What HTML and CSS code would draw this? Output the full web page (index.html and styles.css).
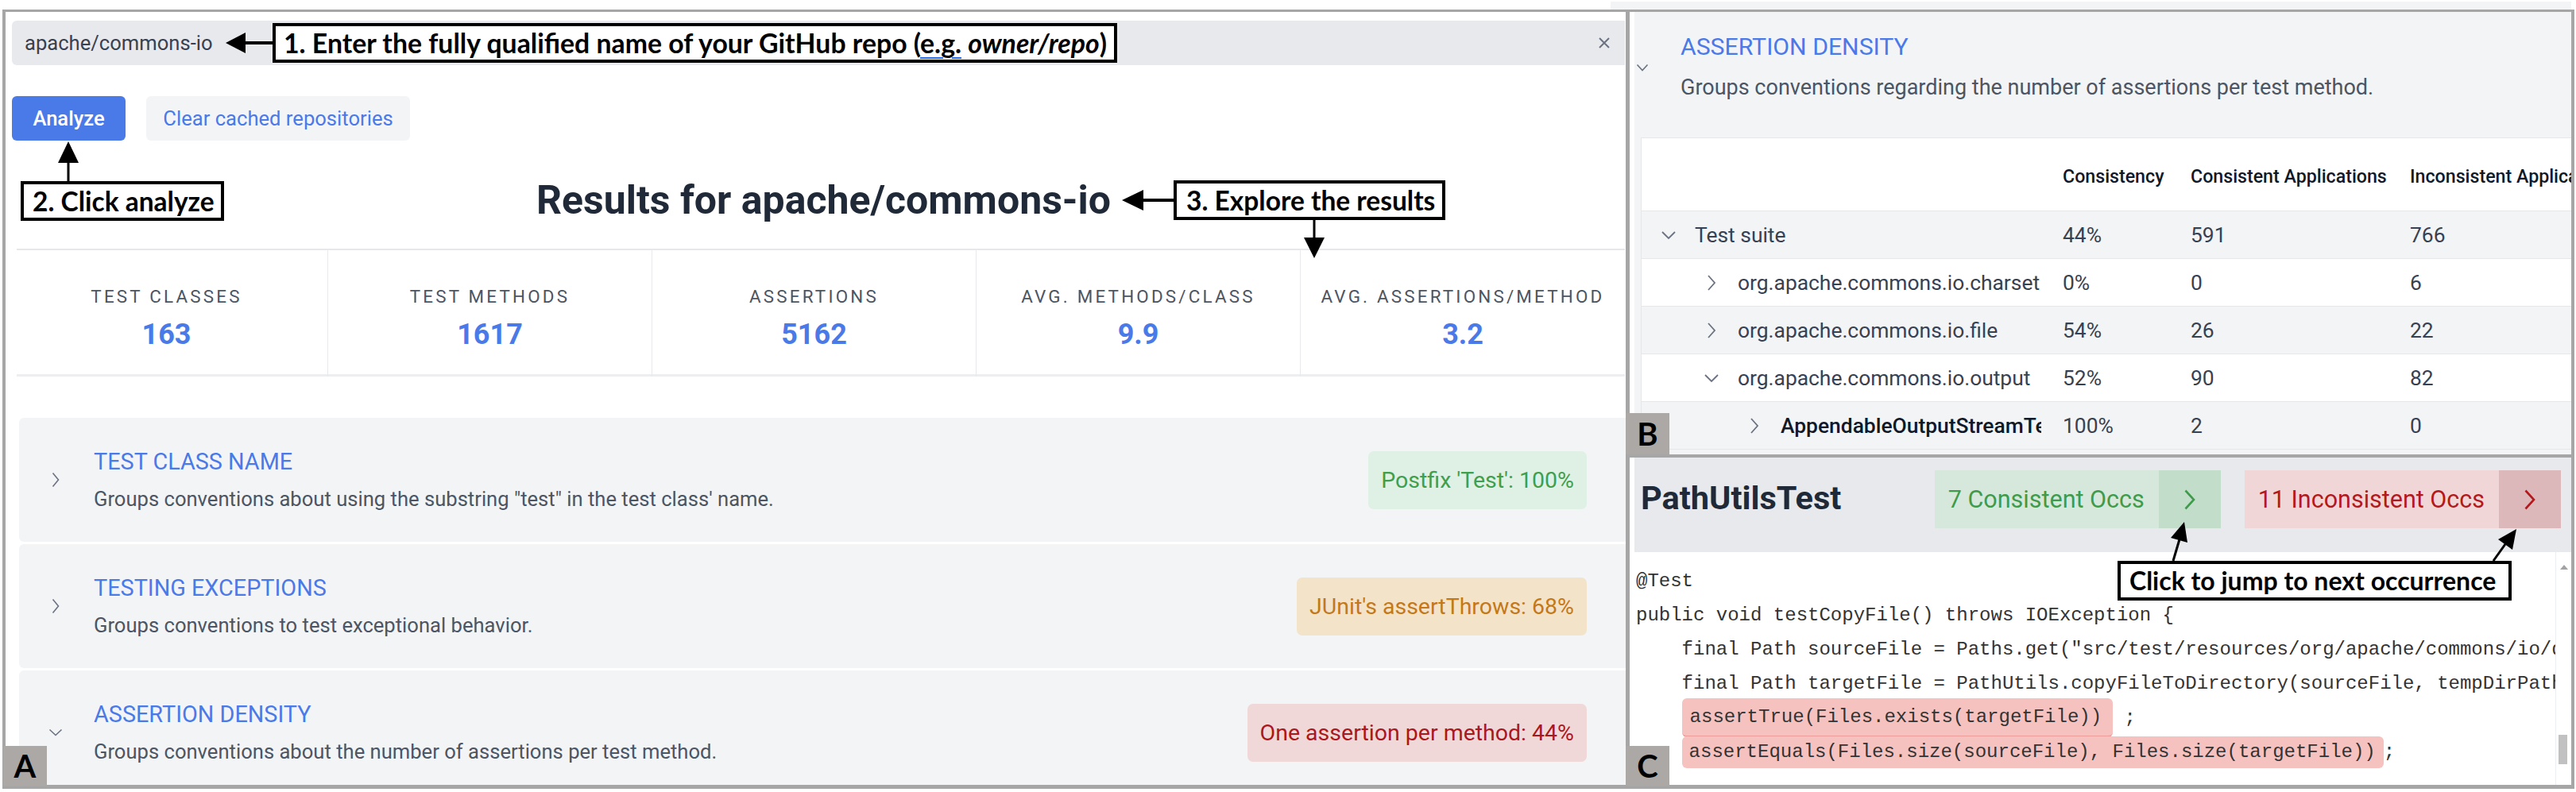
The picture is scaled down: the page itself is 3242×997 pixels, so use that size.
FILE: index.html
```html
<!DOCTYPE html>
<html lang="en">
<head>
<meta charset="utf-8">
<title>Test convention explorer</title>
<link rel="stylesheet" href="styles.css">
</head>
<body>
<div class="top-strip"></div>
<div class="frame">
  <section class="panel panel-a">
    <div class="repo-input">
      <span class="repo-text">apache/commons-io</span>
      <svg class="close" viewBox="0 0 14 14" width="14" height="14"><path d="M1 1 L13 13 M13 1 L1 13" stroke="#6b7280" stroke-width="2" fill="none"/></svg>
    </div>
    <div class="actions">
      <button class="btn btn-primary">Analyze</button>
      <button class="btn btn-secondary">Clear cached repositories</button>
    </div>
    <h1 class="results-title">Results for apache/commons-io</h1>
    <div class="stats">
      <div class="stat"><div class="stat-label">TEST CLASSES</div><div class="stat-value">163</div></div>
      <div class="stat"><div class="stat-label">TEST METHODS</div><div class="stat-value">1617</div></div>
      <div class="stat"><div class="stat-label">ASSERTIONS</div><div class="stat-value">5162</div></div>
      <div class="stat"><div class="stat-label">AVG. METHODS/CLASS</div><div class="stat-value">9.9</div></div>
      <div class="stat"><div class="stat-label">AVG. ASSERTIONS/METHOD</div><div class="stat-value">3.2</div></div>
    </div>
    <div class="groups">
      <div class="group">
        <div class="chev-col"><svg viewBox="0 0 10 20" width="10" height="20"><polyline points="1.5,1.5 8.5,10 1.5,18.5" fill="none" stroke="#6b7280" stroke-width="1.6"/></svg></div>
        <div class="group-text">
          <div class="group-title">TEST CLASS NAME</div>
          <div class="group-desc">Groups conventions about using the substring "test" in the test class' name.</div>
        </div>
        <span class="badge badge-green">Postfix 'Test': 100%</span>
      </div>
      <div class="group">
        <div class="chev-col"><svg viewBox="0 0 10 20" width="10" height="20"><polyline points="1.5,1.5 8.5,10 1.5,18.5" fill="none" stroke="#6b7280" stroke-width="1.6"/></svg></div>
        <div class="group-text">
          <div class="group-title">TESTING EXCEPTIONS</div>
          <div class="group-desc">Groups conventions to test exceptional behavior.</div>
        </div>
        <span class="badge badge-amber">JUnit's assertThrows: 68%</span>
      </div>
      <div class="group">
        <div class="chev-col chev-col-down"><svg viewBox="0 0 18 10" width="18" height="10"><polyline points="1.5,1.5 9,8.5 16.5,1.5" fill="none" stroke="#6b7280" stroke-width="1.6"/></svg></div>
        <div class="group-text">
          <div class="group-title">ASSERTION DENSITY</div>
          <div class="group-desc">Groups conventions about the number of assertions per test method.</div>
        </div>
        <span class="badge badge-red">One assertion per method: 44%</span>
      </div>
    </div>
  </section>

  <div class="right-col">
    <section class="panel panel-b">
      <div class="b-inner">
        <div class="b-head">
          <div class="b-chev"><svg viewBox="0 0 16 10" width="16" height="10"><polyline points="1.5,1.5 8,8.5 14.5,1.5" fill="none" stroke="#6b7280" stroke-width="1.6"/></svg></div>
          <div>
            <div class="b-title">ASSERTION DENSITY</div>
            <div class="b-desc">Groups conventions regarding the number of assertions per test method.</div>
          </div>
        </div>
        <div class="tree">
          <div class="tr thead">
            <div class="td name"></div>
            <div class="td">Consistency</div>
            <div class="td">Consistent Applications</div>
            <div class="td">Inconsistent Applications</div>
          </div>
          <div class="tr alt">
            <div class="td name lvl0"><span class="chev"><svg viewBox="0 0 20 12" width="20" height="12"><polyline points="2,2 10,10 18,2" fill="none" stroke="#6b7280" stroke-width="1.8"/></svg></span><span class="name-text">Test suite</span></div>
            <div class="td">44%</div><div class="td">591</div><div class="td">766</div>
          </div>
          <div class="tr">
            <div class="td name lvl1"><span class="chev"><svg viewBox="0 0 12 22" width="12" height="22"><polyline points="2,2 10,11 2,20" fill="none" stroke="#6b7280" stroke-width="1.8"/></svg></span><span class="name-text">org.apache.commons.io.charset</span></div>
            <div class="td">0%</div><div class="td">0</div><div class="td">6</div>
          </div>
          <div class="tr alt">
            <div class="td name lvl1"><span class="chev"><svg viewBox="0 0 12 22" width="12" height="22"><polyline points="2,2 10,11 2,20" fill="none" stroke="#6b7280" stroke-width="1.8"/></svg></span><span class="name-text">org.apache.commons.io.file</span></div>
            <div class="td">54%</div><div class="td">26</div><div class="td">22</div>
          </div>
          <div class="tr">
            <div class="td name lvl1"><span class="chev"><svg viewBox="0 0 20 12" width="20" height="12"><polyline points="2,2 10,10 18,2" fill="none" stroke="#6b7280" stroke-width="1.8"/></svg></span><span class="name-text">org.apache.commons.io.output</span></div>
            <div class="td">52%</div><div class="td">90</div><div class="td">82</div>
          </div>
          <div class="tr alt strong">
            <div class="td name lvl2"><span class="chev"><svg viewBox="0 0 12 22" width="12" height="22"><polyline points="2,2 10,11 2,20" fill="none" stroke="#6b7280" stroke-width="1.8"/></svg></span><span class="name-text">AppendableOutputStreamTest</span></div>
            <div class="td">100%</div><div class="td">2</div><div class="td">0</div>
          </div>
        </div>
      </div>
    </section>

    <section class="panel panel-c">
      <div class="c-head">
        <div class="c-title">PathUtilsTest</div>
        <div class="occ-group">
          <div class="occ occ-green">
            <span class="occ-label">7 Consistent Occs</span>
            <span class="occ-next"><svg viewBox="0 0 16 28" width="16" height="28"><polyline points="2.5,2.5 13,14 2.5,25.5" fill="none" stroke="#3f9b4b" stroke-width="2.6"/></svg></span>
          </div>
          <div class="occ occ-red">
            <span class="occ-label">11 Inconsistent Occs</span>
            <span class="occ-next"><svg viewBox="0 0 16 28" width="16" height="28"><polyline points="2.5,2.5 13,14 2.5,25.5" fill="none" stroke="#b3191c" stroke-width="2.6"/></svg></span>
          </div>
        </div>
      </div>
      <div class="code-wrap">
        <div class="code">
          <div class="line">@Test</div>
          <div class="line">public void testCopyFile() throws IOException {</div>
          <div class="line">    final Path sourceFile = Paths.get("src/test/resources/org/apache/commons/io/dirs-1-file-size-1/file-size-1.bin");</div>
          <div class="line">    final Path targetFile = PathUtils.copyFileToDirectory(sourceFile, tempDirPath);</div>
          <div class="line"><span class="indent">    </span><span class="hl hl-1">assertTrue(Files.exists(targetFile))</span><span class="semi"> ;</span></div>
          <div class="line"><span class="indent">    </span><span class="hl hl-2">assertEquals(Files.size(sourceFile), Files.size(targetFile))</span><span class="semi">;</span></div>
          <div class="line">}</div>
        </div>
        <div class="scrollbar">
          <div class="sb-arrow"></div>
          <div class="sb-thumb"></div>
        </div>
      </div>
    </section>
  </div>
</div>

<div class="tag tag-a">A</div>
<div class="tag tag-b">B</div>
<div class="tag tag-c">C</div>

<div class="note note-1">1. Enter the fully qualified name of your GitHub repo (<span class="eg">e.g.</span> <i>owner/repo</i>)</div>
<div class="note note-2">2. Click analyze</div>
<div class="note note-3">3. Explore the results</div>
<div class="note note-4">Click to jump to next occurrence</div>

<svg class="arrows" width="3242" height="997" viewBox="0 0 3242 997">
  <g stroke="#000" fill="none">
    <line x1="343" y1="54" x2="303" y2="54" stroke-width="4"/>
    <line x1="86" y1="228" x2="86" y2="200" stroke-width="3"/>
    <line x1="1477" y1="252" x2="1432" y2="252" stroke-width="4"/>
    <line x1="1654" y1="276" x2="1654" y2="303" stroke-width="3"/>
    <line x1="2735" y1="706" x2="2743" y2="679" stroke-width="3"/>
    <line x1="3138" y1="706" x2="3153" y2="685" stroke-width="3"/>
  </g>
  <g fill="#000">
    <polygon points="284,54 309,41 309,67"/>
    <polygon points="86,178 73,205 99,205"/>
    <polygon points="1412,252 1439,239 1439,265"/>
    <polygon points="1654,325 1641,299 1667,299"/>
    <polygon points="2749,657 2753,683 2732,677"/>
    <polygon points="3167,666 3162,692 3144,679"/>
  </g>
</svg>
</body>
</html>
```

FILE: styles.css
```css
* {
  box-sizing: border-box;
  margin: 0;
  padding: 0;
}

html,
body {
  width: 3242px;
  height: 997px;
  overflow: hidden;
  background: #ffffff;
}

body {
  position: relative;
  padding: 12px 0 0 3px;
  font-family: Roboto, "Liberation Sans", sans-serif;
  color: #1f2937;
}

.top-strip {
  position: absolute;
  left: 2027px;
  top: 2px;
  width: 1209px;
  height: 10px;
  background: #f3f4f6;
}

/* ---------- frame ---------- */
.frame {
  width: 3237px;
  height: 981px;
  background: #a6a6a6;
  padding: 3px 4px 5px 4px;
  display: grid;
  grid-template-columns: 2039px 1185px;
  column-gap: 5px;
}

.panel {
  background: #ffffff;
  overflow: hidden;
  min-width: 0;
  min-height: 0;
}

.right-col {
  display: grid;
  grid-template-rows: 557px 412px;
  row-gap: 4px;
  min-height: 0;
}

/* ---------- panel A ---------- */
.repo-input {
  margin: 11px 1px 0 8px;
  height: 56px;
  background: #e8e9ed;
  border-radius: 6px 0 0 6px;
  display: flex;
  align-items: center;
  padding: 0 19px 0 16px;
  font-size: 25.6px;
  color: #374151;
}

.repo-text {
  flex: 1;
}

.close {
  display: block;
}

.actions {
  display: flex;
  gap: 26px;
  margin: 39px 0 0 8px;
}

.btn {
  height: 56px;
  border: 0;
  border-radius: 6px;
  font-family: Roboto, "Liberation Sans", sans-serif;
  font-size: 25.6px;
}

.btn-primary {
  width: 143px;
  background: #4a79e8;
  color: #ffffff;
  font-weight: 500;
}

.btn-secondary {
  width: 332px;
  background: #f3f4f6;
  color: #4a79e8;
}

.results-title {
  margin-top: 46px;
  height: 58px;
  line-height: 58px;
  font-size: 50px;
  font-weight: 700;
  text-align: center;
  padding-left: 20px;
  color: #1f2937;
}

.stats {
  margin: 32px 1px 0 0;
  height: 161px;
  display: grid;
  grid-template-columns: 405px 408px 408px 408px 1fr;
  background:
    linear-gradient(#e5e7eb, #e5e7eb) 14px 0 / calc(100% - 14px) 2px no-repeat,
    linear-gradient(#eceef1, #eceef1) 14px 100% / calc(100% - 14px) 3px no-repeat;
}

.stat {
  text-align: center;
  padding-top: 44px;
}

.stat + .stat {
  border-left: 1px solid #e7e9ed;
}

.stat-label {
  font-size: 22.4px;
  letter-spacing: 3.2px;
  line-height: 32px;
  color: #4b5563;
}

.stat-value {
  font-size: 36px;
  font-weight: 700;
  line-height: 44px;
  margin-top: 10px;
  color: #4a79e8;
}

.groups {
  margin: 52px 0 0 17px;
  display: flex;
  flex-direction: column;
  gap: 3px;
}

.group {
  flex: none;
  height: 156px;
  background: #f3f4f6;
  border-radius: 6px 0 0 6px;
  display: flex;
  align-items: center;
  padding-right: 49px;
}

.chev-col {
  width: 94px;
  flex: none;
  padding-left: 41px;
  display: flex;
  align-items: center;
}

.chev-col-down {
  padding-left: 37px;
}

.chev-col svg,
.b-chev svg,
.chev svg,
.occ-next svg {
  display: block;
}

.group-title {
  font-size: 28.8px;
  line-height: 36px;
  color: #4a79e8;
}

.group-desc {
  font-size: 25.6px;
  line-height: 36px;
  margin-top: 11px;
  color: #4b5563;
}

.badge {
  margin-left: auto;
  height: 73px;
  line-height: 73px;
  padding: 0 16px;
  border-radius: 7px;
  font-size: 28.5px;
  font-weight: 400;
  white-space: nowrap;
}

.badge-green {
  background: #dff0e4;
  color: #3f9f4c;
}

.badge-amber {
  background: #f3e3c8;
  color: #c47818;
}

.badge-red {
  background: #f0d7d8;
  color: #aa171c;
}

/* ---------- panel B ---------- */
.panel-b {
  padding-left: 6px;
}

.b-inner {
  height: 100%;
  background: #f3f4f6;
  padding-top: 26px;
  overflow: hidden;
}

.b-head {
  display: flex;
  align-items: center;
}

.b-chev {
  width: 58px;
  flex: none;
  padding-left: 2px;
}

.b-title {
  font-size: 30.2px;
  line-height: 36px;
  color: #4a79e8;
}

.b-desc {
  font-size: 27px;
  line-height: 36px;
  margin-top: 15px;
  color: #4b5563;
  white-space: nowrap;
}

.tree {
  margin: 45px 0 0 8px;
  width: 1300px;
  background: #ffffff;
  border-top: 1px solid #e5e7eb;
  border-left: 1px solid #e5e7eb;
}

.tr {
  display: grid;
  grid-template-columns: 516px 161px 276px 347px;
  height: 60px;
  align-items: center;
  border-bottom: 1px solid #e5e7eb;
  font-size: 26.4px;
  color: #374151;
}

.tr.alt {
  background: #f3f4f6;
}

.tr.thead {
  height: 92px;
  padding-top: 5px;
  font-size: 23.2px;
  font-weight: 500;
  color: #111827;
  background: #ffffff;
}

.tr.strong .name-text {
  font-weight: 500;
  color: #111827;
}

.td {
  padding-left: 14px;
  white-space: nowrap;
  overflow: hidden;
}

.td.name {
  display: flex;
  align-items: center;
  padding-right: 13px;
}

.lvl0 {
  padding-left: 24px !important;
}

.lvl1 {
  padding-left: 78px !important;
}

.lvl2 {
  padding-left: 132px !important;
}

.chev {
  width: 20px;
  flex: none;
  display: flex;
  justify-content: center;
  margin-right: 23px;
}

.name-text {
  overflow: hidden;
  white-space: nowrap;
}

/* ---------- panel C ---------- */
.panel-c {
  display: flex;
  flex-direction: column;
}

.c-head {
  flex: none;
  margin-left: 6px;
  height: 119px;
  background: #e8e9ed;
  display: flex;
  align-items: flex-start;
  padding: 16px 13px 0 8px;
}

.c-title {
  font-size: 41.5px;
  font-weight: 700;
  line-height: 70px;
  color: #1f2937;
}

.occ-group {
  margin-left: auto;
  display: flex;
  gap: 30px;
}

.occ {
  display: flex;
  height: 73px;
}

.occ-label {
  padding: 0 18px 0 17px;
  line-height: 73px;
  font-size: 30.5px;
  white-space: nowrap;
}

.occ-next {
  width: 78px;
  display: flex;
  align-items: center;
  justify-content: center;
}

.occ-green .occ-label {
  background: #d5e8db;
  color: #3f9b4b;
}

.occ-green .occ-next {
  background: #c3ddcb;
}

.occ-red .occ-label {
  background: #f0d6d7;
  color: #b3191c;
}

.occ-red .occ-next {
  background: #dcb8ba;
}

.code-wrap {
  flex: 1;
  display: flex;
  min-height: 0;
}

.code {
  flex: 1;
  min-width: 0;
  overflow: hidden;
  padding: 15px 0 0 8px;
  font-family: "Liberation Mono", "DejaVu Sans Mono", monospace;
  font-size: 24px;
  color: #333333;
}

.line {
  height: 43px;
  display: flex;
  align-items: center;
  white-space: pre;
}

.indent,
.semi {
  white-space: pre;
}

.hl {
  display: flex;
  align-items: center;
  background: #f6c2bf;
  border-radius: 6px;
  white-space: pre;
}

.hl-1 {
  height: 49px;
  padding: 0 14px 0 10px;
  border-bottom: 2px solid #ee9e9a;
}

.hl-2 {
  height: 40px;
  padding: 0 10px 0 9px;
}

.scrollbar {
  width: 20px;
  flex: none;
  background: #ffffff;
  border-left: 1px solid #eceef1;
  padding-top: 16px;
}

.sb-arrow {
  width: 0;
  height: 0;
  margin-left: 5px;
  border-left: 5px solid transparent;
  border-right: 5px solid transparent;
  border-bottom: 6px solid #a3a3a3;
}

.sb-thumb {
  margin: 208px 0 0 3px;
  width: 11px;
  height: 37px;
  background: #c1c1c1;
}

/* ---------- overlays ---------- */
.tag {
  position: absolute;
  width: 55px;
  background: #aca8a6;
  color: #000000;
  font-family: Lato, "Open Sans", sans-serif;
  font-weight: 700;
  font-size: 40px;
  display: flex;
  align-items: center;
  justify-content: center;
}

.tag-a {
  left: 4px;
  top: 939px;
  height: 50px;
}

.tag-b {
  left: 2046px;
  top: 520px;
  height: 52px;
}

.tag-c {
  left: 2046px;
  top: 939px;
  height: 50px;
}

.note {
  position: absolute;
  height: 50px;
  background: #ffffff;
  border: 4px solid #000000;
  font-family: Lato, "Open Sans", sans-serif;
  font-weight: 700;
  font-size: 33.5px;
  line-height: 42px;
  padding-left: 11px;
  white-space: nowrap;
  color: #000000;
  overflow: hidden;
}

.note-1 {
  left: 343px;
  top: 29px;
  width: 1063px;
  font-size: 33.8px;
  padding-left: 10px;
}

.note-2 {
  left: 26px;
  top: 228px;
  width: 256px;
}

.note-3 {
  left: 1477px;
  top: 227px;
  width: 342px;
  padding-left: 12px;
}

.note-4 {
  left: 2665px;
  top: 706px;
  width: 496px;
  font-size: 32px;
}

.eg {
  text-decoration: underline;
  text-decoration-color: #2b6de8;
  text-decoration-thickness: 2px;
  text-underline-offset: 5px;
}

.arrows {
  position: absolute;
  left: 0;
  top: 0;
  pointer-events: none;
}
```
